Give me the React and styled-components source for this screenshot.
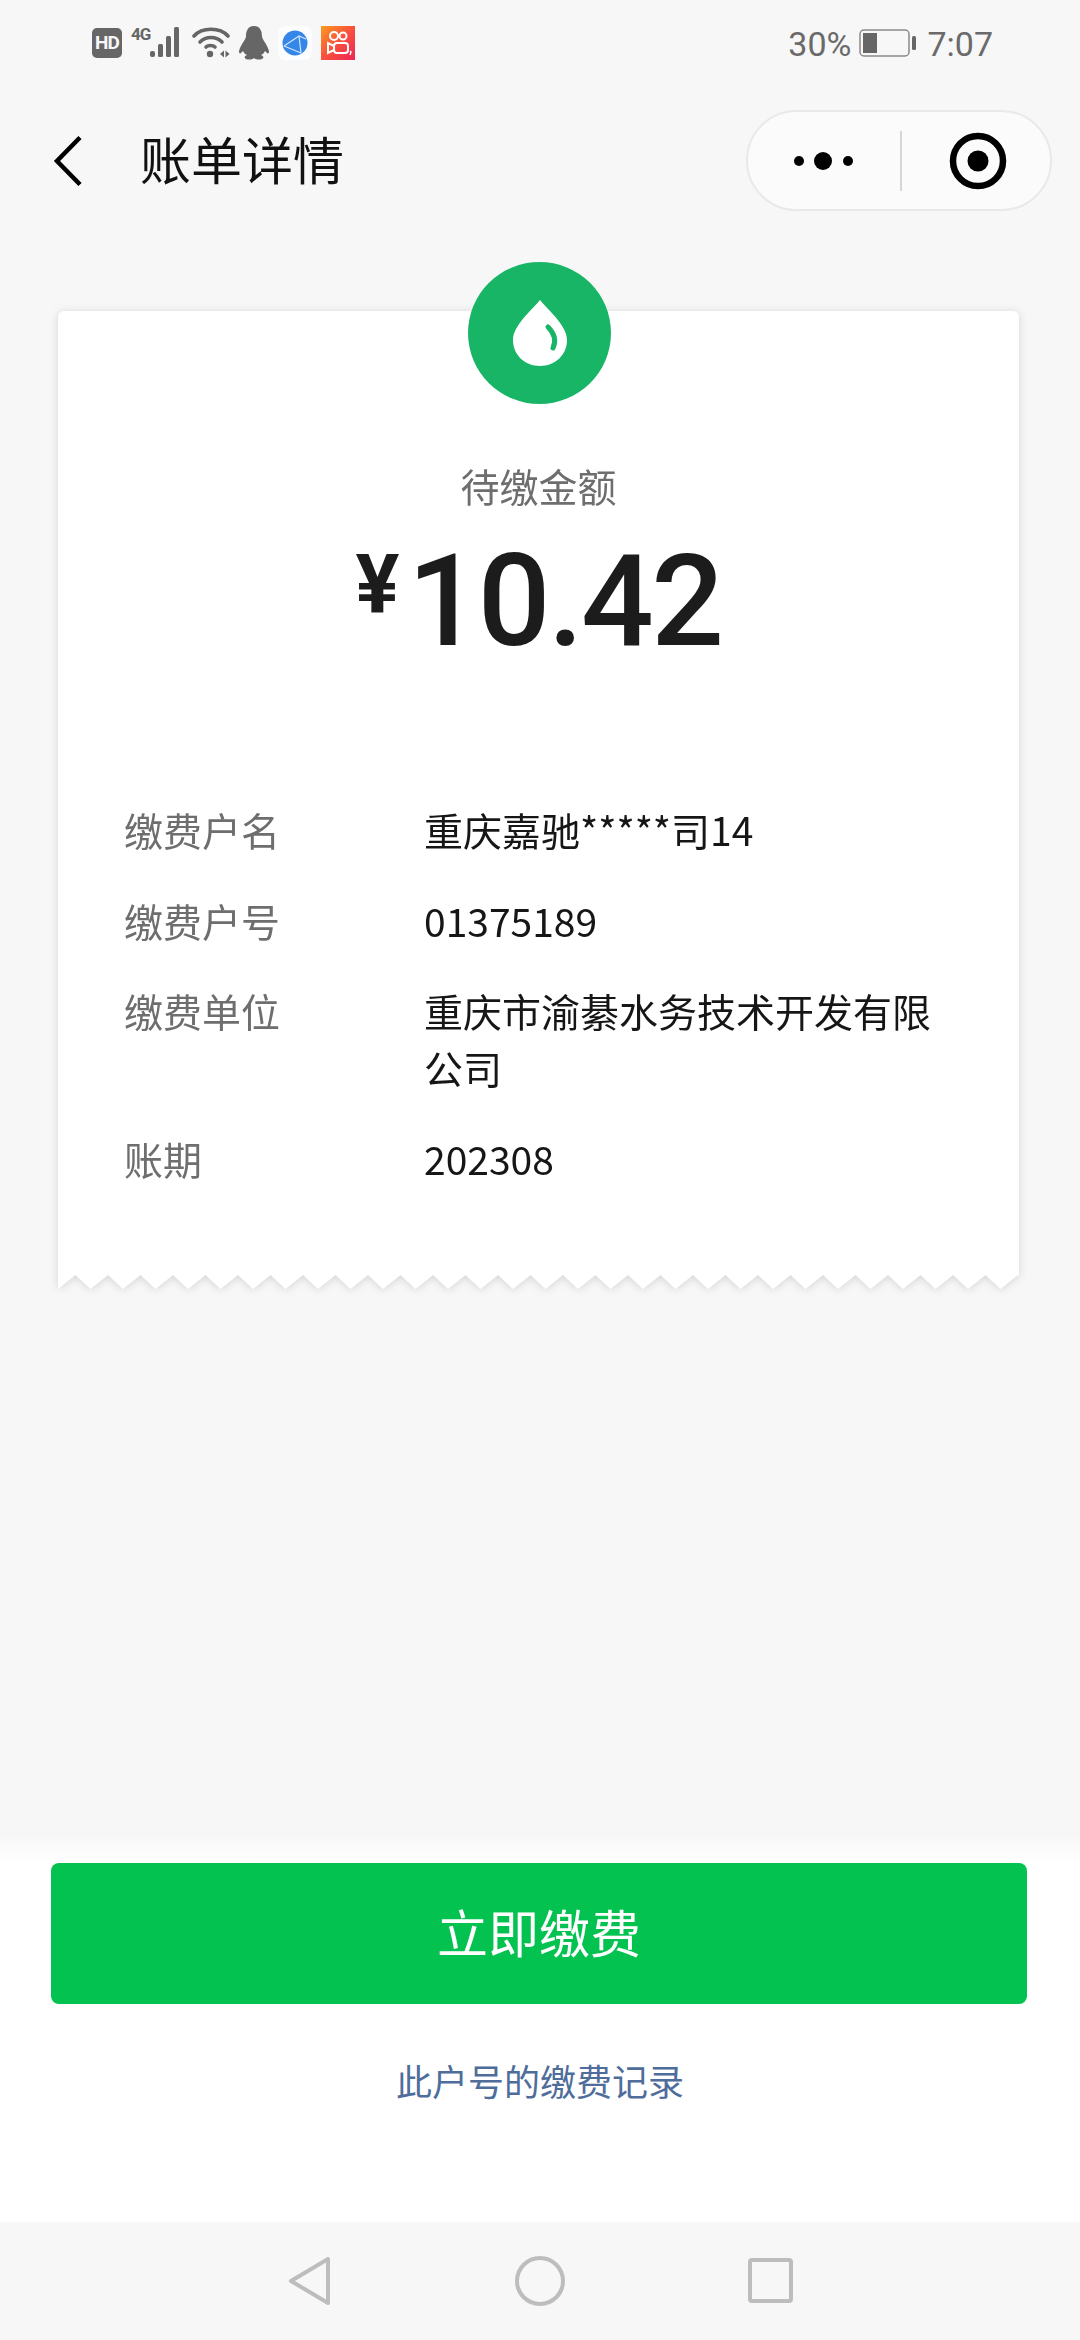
import React from 'react'
import styled, { createGlobalStyle } from 'styled-components'

const CJK = '"Noto Sans CJK SC", "Noto Sans", sans-serif'

const GlobalStyle = createGlobalStyle`
  html, body {
    margin: 0;
    padding: 0;
    background: #f7f7f7;
  }
  * { box-sizing: border-box; }
`

const Page = styled.div`
  width: 1080px;
  height: 2340px;
  display: flex;
  flex-direction: column;
  background: #f7f7f7;
  font-family: ${CJK};
  overflow: hidden;
`

const StatusBar = styled.div`
  height: 86px;
  flex: none;
  display: flex;
  align-items: center;
  justify-content: space-between;
  padding: 0 87px 0 92px;
`
const StatusGroup = styled.div`
  display: flex;
  align-items: center;
  gap: ${(p) => p.$gap || 9}px;
`
const HdBadge = styled.span`
  width: 30px;
  height: 30px;
  border-radius: 5px;
  background: #666;
  color: #f7f7f7;
  font: 700 19px/30px "Roboto", sans-serif;
  text-align: center;
  letter-spacing: -1px;
`
const SignalBox = styled.div`
  position: relative;
  width: 52px;
  height: 34px;
`
const NetLabel = styled.span`
  position: absolute;
  left: 0;
  top: -2px;
  font: 700 17px/20px "Roboto", sans-serif;
  letter-spacing: -1px;
  color: #666;
`
const StatusText = styled.span`
  font: 400 34px/40px "Roboto", sans-serif;
  color: #6a6a6a;
  padding-top: 2px;
`

const Header = styled.div`
  height: 154px;
  flex: none;
  display: flex;
  align-items: center;
  padding: 0 28px 5px 51px;
`
const Title = styled.div`
  font-size: 51px;
  line-height: 60px;
  color: #111;
  margin-left: 57px;
  padding-bottom: 5px;
  flex: 1;
`
const Capsule = styled.div`
  width: 306px;
  height: 101px;
  border: 2px solid #e9e9e9;
  border-radius: 51px;
  background: #fbfbfb;
  display: flex;
  align-items: center;
`
const CapsulePart = styled.div`
  flex: 1;
  height: 100%;
  display: flex;
  align-items: center;
  justify-content: center;
  padding-left: ${(p) => p.$shift || 0}px;
`
const MenuPart = styled(CapsulePart)`
  flex: none;
  width: 152px;
`
const CapsuleLine = styled.div`
  width: 2px;
  height: 60px;
  background: #d6d6d6;
`

const Main = styled.div`
  flex: 1;
  padding: 71px 61px 0 58px;
`
const Ticket = styled.div`
  position: relative;
`
const TicketPaper = styled.div`
  filter: drop-shadow(0 1px 4px rgba(0, 0, 0, 0.14));
`
const TicketBody = styled.div`
  background: #fff;
  border-radius: 6px 6px 0 0;
  height: 964px;
  padding: 147px 66px 0;
`
const Zigzag = styled.svg`
  display: block;
  width: 100%;
  height: 14px;
`
const DropBadge = styled.div`
  position: absolute;
  top: -49px;
  left: 410px;
  width: 143px;
  height: 142px;
  border-radius: 50%;
  background: #19b567;
  display: flex;
  align-items: center;
  justify-content: center;
`
const AmountLabel = styled.div`
  font-size: 39px;
  line-height: 54px;
  color: #6e6e6e;
  text-align: center;
`
const Amount = styled.div`
  display: flex;
  justify-content: center;
  align-items: flex-start;
  height: 140px;
  margin-top: 14px;
  margin-bottom: 135px;
  color: #1c1c1c;
  font-family: "Roboto", sans-serif;
  font-weight: 500;
`
const Currency = styled.span`
  font-size: 82px;
  line-height: 116px;
  font-weight: 700;
  margin-right: 8px;
`
const AmountValue = styled.span`
  font-size: 128px;
  line-height: 150px;
  letter-spacing: -2.5px;
`
const InfoList = styled.div`
  display: flex;
  flex-direction: column;
  gap: 33.5px;
`
const InfoRow = styled.div`
  display: flex;
  font-size: 39px;
  line-height: 57px;
`
const InfoKey = styled.div`
  width: 300px;
  flex: none;
  color: #6e6e6e;
`
const InfoValue = styled.div`
  flex: 1;
  color: #161616;
`

const Footer = styled.div`
  flex: none;
  height: 387px;
  background: #fff;
  display: flex;
  flex-direction: column;
  align-items: center;
`
const Fade = styled.div`
  align-self: stretch;
  height: 28px;
  background: linear-gradient(#f7f7f7, #fff);
`
const PayButton = styled.button`
  width: 976px;
  height: 141px;
  margin-left: -2px;
  padding: 0 0 5px;
  border: 0;
  border-radius: 8px;
  background: #04c250;
  color: #fff;
  font-family: ${CJK};
  font-size: 51px;
`
const RecordLink = styled.a`
  margin-top: 49px;
  font-size: 36px;
  line-height: 54px;
  color: #4f6d9b;
`

const NavBar = styled.div`
  height: 118px;
  flex: none;
  background: #f7f7f7;
  display: flex;
  justify-content: center;
  align-items: flex-start;
  gap: 181px;
  padding-top: 34px;
`

const zigzagPoints = () => {
  const pts = ['0,0', '0,14']
  let x = 0
  while (x < 961) {
    pts.push(`${x + 17.5},0`)
    pts.push(`${x + 32.5},14`)
    x += 32.5
  }
  pts.push('961,0')
  return pts.join(' ')
}

const rows = [
  ['缴费户名', '重庆嘉驰*****司14'],
  ['缴费户号', '01375189'],
  ['缴费单位', '重庆市渝綦水务技术开发有限公司'],
  ['账期', '202308'],
]

const App = () => (
  <Page>
    <GlobalStyle />
    <StatusBar>
      <StatusGroup>
        <HdBadge>HD</HdBadge>
        <SignalBox>
          <NetLabel>4G</NetLabel>
          <svg width="52" height="34" viewBox="0 0 52 34" fill="#666">
            <rect x="19" y="25" width="5" height="6" rx="2" />
            <rect x="27" y="18" width="5" height="13" rx="1.5" />
            <rect x="35" y="10" width="5" height="21" rx="1.5" />
            <rect x="43" y="1" width="5" height="30" rx="1.5" />
          </svg>
        </SignalBox>
        <svg width="38" height="34" viewBox="0 0 38 34" fill="none" stroke="#666" strokeWidth="3.6" strokeLinecap="round">
          <path d="M2 10C10 1 28 1 36 10" />
          <path d="M8 16C14 10 24 10 30 16" />
          <path d="M14 21C16 19 21 19 23 21" />
          <circle cx="18" cy="28" r="3.2" fill="#666" stroke="none" />
          <path d="M28 28l4-3.5v7zM33.5 24.500l4 3.500-4 3.500z" fill="#666" stroke="none" />
        </svg>
        <svg width="30" height="34" viewBox="0 0 30 34" fill="#666">
          <path d="M15 0C9 0 7 5 7 10c0 2-1 3-2 5-2 3-5 8-5 11 0 1 1 2 2 1l2-2c1 2 2 3 4 4-2 1-3 2-2 3 1 2 7 2 9 0 2 2 8 2 9 0 1-1 0-2-2-3 2-1 3-2 4-4l2 2c1 1 2 0 2-1 0-3-3-8-5-11-1-2-2-3-2-5 0-5-2-10-8-10z" />
        </svg>
        <svg width="34" height="34" viewBox="0 0 34 34">
          <rect width="34" height="34" rx="7" fill="#fcfdff" />
          <circle cx="17" cy="17" r="12.500" fill="#3487e8" />
          <path d="M6 20L21 10L23 27M21 10L28 13M6 20L23 27" stroke="#d4e6fb" strokeWidth="1.200" fill="none" />
        </svg>
        <svg width="34" height="34" viewBox="0 0 34 34">
          <defs>
            <linearGradient id="ks" x1="0" y1="0" x2="1" y2="1">
              <stop offset="0" stopColor="#fb9a1e" />
              <stop offset="0.5" stopColor="#f8503e" />
              <stop offset="1" stopColor="#ee2556" />
            </linearGradient>
          </defs>
          <rect width="34" height="34" fill="url(#ks)" />
          <g fill="none" stroke="#fff" strokeWidth="2">
            <circle cx="13" cy="10" r="4" />
            <circle cx="22" cy="10" r="3.500" />
            <rect x="13" y="17" width="14" height="10" rx="3" />
            <path d="M13 20l-6-3v10l6-3" />
          </g>
          <path d="M29 25l1 1-1 3" stroke="#fff" strokeWidth="1.400" fill="none" />
        </svg>
      </StatusGroup>
      <StatusGroup $gap={8}>
        <StatusText>30%</StatusText>
        <svg width="60" height="28" viewBox="0 0 60 28">
          <rect x="1" y="1" width="49" height="26" rx="4" fill="none" stroke="#8a8a8a" strokeWidth="1.500" />
          <rect x="4" y="4" width="14" height="20" fill="#666" />
          <rect x="53" y="7" width="4" height="14" rx="1.500" fill="#666" />
        </svg>
        <StatusText>7:07</StatusText>
      </StatusGroup>
    </StatusBar>

    <Header>
      <svg width="32" height="54" viewBox="0 0 32 54" fill="none" stroke="#000" strokeWidth="4.500">
        <path d="M29 3.500L6 27l23 23.500" />
      </svg>
      <Title>账单详情</Title>
      <Capsule>
        <MenuPart>
          <svg width="62" height="20" viewBox="0 0 62 20" fill="#000">
            <circle cx="6" cy="10" r="5" />
            <circle cx="30" cy="10" r="9" />
            <circle cx="55" cy="10" r="5" />
          </svg>
        </MenuPart>
        <CapsuleLine />
        <CapsulePart $shift={4}>
          <svg width="58" height="58" viewBox="0 0 58 58">
            <circle cx="29" cy="29" r="25" fill="none" stroke="#000" strokeWidth="6.500" />
            <circle cx="29" cy="29" r="10.500" fill="#000" />
          </svg>
        </CapsulePart>
      </Capsule>
    </Header>

    <Main>
      <Ticket>
        <TicketPaper>
          <TicketBody>
            <AmountLabel>待缴金额</AmountLabel>
            <Amount>
              <Currency>¥</Currency>
              <AmountValue>10.42</AmountValue>
            </Amount>
            <InfoList>
              {rows.map(([k, v]) => (
                <InfoRow key={k}>
                  <InfoKey>{k}</InfoKey>
                  <InfoValue>{v}</InfoValue>
                </InfoRow>
              ))}
            </InfoList>
          </TicketBody>
          <Zigzag viewBox="0 0 961 14" preserveAspectRatio="none">
            <polygon points={zigzagPoints()} fill="#fff" />
          </Zigzag>
        </TicketPaper>
        <DropBadge>
          <svg width="56" height="68" viewBox="0 0 56 68">
            <path d="M28 1C21 10 1 26 1 41c0 15 12 26 27 26s27-11 27-26C55 26 35 10 28 1z" fill="#fff" />
            <path d="M36 28Q46 38 41 49" fill="none" stroke="#19b567" strokeWidth="5" strokeLinecap="round" />
          </svg>
        </DropBadge>
      </Ticket>
    </Main>

    <Footer>
      <Fade />
      <PayButton>立即缴费</PayButton>
      <RecordLink>此户号的缴费记录</RecordLink>
    </Footer>

    <NavBar>
      <svg width="50" height="50" viewBox="0 0 50 50" fill="none" stroke="#bdbdbd" strokeWidth="4" strokeLinejoin="round">
        <path d="M44 3v44L7 25z" />
      </svg>
      <svg width="50" height="50" viewBox="0 0 50 50" fill="none" stroke="#bdbdbd" strokeWidth="4">
        <circle cx="25" cy="25" r="23" />
      </svg>
      <svg width="50" height="50" viewBox="0 0 50 50" fill="none" stroke="#bdbdbd" strokeWidth="4" strokeLinejoin="round">
        <rect x="4" y="4" width="41" height="41" rx="2" />
      </svg>
    </NavBar>
  </Page>
)

export default App
